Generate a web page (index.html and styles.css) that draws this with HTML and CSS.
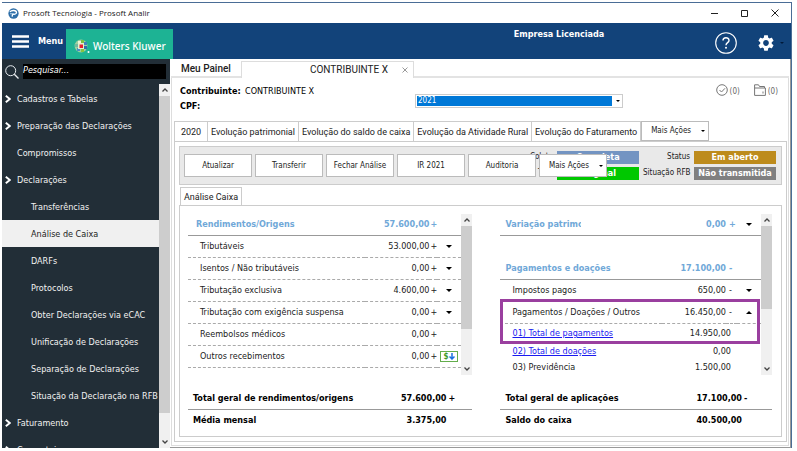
FILE: index.html
```html
<!DOCTYPE html>
<html lang="pt-BR">
<head>
<meta charset="utf-8">
<title>Prosoft Tecnologia - Prosoft Analir</title>
<link rel="stylesheet" href="styles.css">
</head>
<body>
<div class="window">
  <div class="titlebar">
    <svg class="app-icon" viewBox="0 0 12 12" aria-hidden="true"><circle cx="6" cy="6" r="5.600" fill="#2f6fa8"/><path d="M2 4.200C4 2 9 2.200 9.300 4.800C9.400 7 6 7 5 7L4.500 9.500" fill="none" stroke="#fff" stroke-width="1.500"/><path d="M2.200 6.300H6.500" stroke="#bcdcf2" stroke-width="1"/></svg>
    <span class="title">Prosoft Tecnologia - Prosoft Analir</span>
    <div class="window-buttons">
      <button type="button" aria-label="Minimizar"><svg viewBox="0 0 8 8"><path d="M0 4.500H7"/></svg></button>
      <button type="button" aria-label="Maximizar"><svg viewBox="0 0 8 8"><path d="M.5 1.500H6.500V7.500H.5Z"/></svg></button>
      <button type="button" aria-label="Fechar"><svg viewBox="0 0 8 8"><path d="M.5 .5L7.500 7.500M7.500 .5L.5 7.500"/></svg></button>
    </div>
  </div>

  <header class="header">
    <button type="button" class="menu-button">
      <svg viewBox="0 0 17 13" aria-hidden="true"><path d="M0 1.500H17M0 6.500H17M0 11.500H17" stroke="#fff" stroke-width="2.400"/></svg>
      Menu
    </button>
    <div class="brand">
      <svg viewBox="0 0 16 16" aria-hidden="true">
        <circle cx="7" cy="8" r="6.400" fill="#9ed0a0"/>
        <path d="M4 3H7V6H4Z" fill="#e9f5dc"/><path d="M7 2H10V5H7Z" fill="#7cc142"/><path d="M10 4H13V7H10Z" fill="#3f83bd"/><path d="M10 8H13V11H10Z" fill="#2e6fab"/><path d="M7 11H10V14H7Z" fill="#86c440"/><path d="M3 10H6V13H3Z" fill="#4b90c3"/><path d="M1 6H4V9H1Z" fill="#6fb9a0"/>
        <rect x="4" y="5" width="6" height="6" fill="#e3f2d0"/><rect x="5.500" y="6.500" width="3.500" height="3.500" fill="#e5202e"/><circle cx="14.500" cy="14" r="1" fill="#fff"/>
      </svg>
      Wolters Kluwer
    </div>
    <span class="company">Empresa Licenciada</span>
    <div class="header-actions">
      <button type="button" class="help" aria-label="Ajuda"><svg viewBox="0 0 22 22"><circle cx="11" cy="11" r="10.300" fill="none" stroke="#fff" stroke-width="1.100"/><path d="M8 8.600C8 4.800 14 4.800 14 8.400C14 10.700 11 10.600 11 13.200" fill="none" stroke="#fff" stroke-width="1.400"/><circle cx="11" cy="15.700" r="1" fill="#fff"/></svg></button>
      <button type="button" class="gear" aria-label="Configurações"><svg viewBox="2 2 20 20"><path fill="#fff" fill-rule="evenodd" d="M19.140 12.940c.04-.3.06-.61.06-.94 0-.32-.02-.64-.07-.94l2.030-1.580c.18-.14.23-.41.12-.61l-1.920-3.320c-.12-.22-.37-.29-.59-.22l-2.390.96c-.5-.38-1.030-.7-1.620-.94l-.36-2.540c-.04-.24-.24-.41-.48-.41h-3.840c-.24 0-.43.17-.47.41l-.36 2.540c-.59.24-1.130.57-1.620.94l-2.390-.96c-.22-.08-.47 0-.59.22L2.740 8.870c-.12.210-.08.470.12.610l2.030 1.580c-.05.3-.09.630-.09.940s.02.640.07.940l-2.030 1.580c-.18.140-.23.410-.12.610l1.920 3.320c.12.220.37.290.59.220l2.390-.96c.5.380 1.030.7 1.620.94l.36 2.540c.05.240.24.410.48.410h3.840c.24 0 .44-.17.47-.41l.36-2.540c.59-.24 1.130-.56 1.620-.94l2.390.96c.22.080.47 0 .59-.22l1.920-3.320c.12-.22.07-.47-.12-.61l-2.010-1.580zM12 15.600c-1.980 0-3.600-1.620-3.600-3.600s1.620-3.600 3.600-3.600 3.600 1.620 3.600 3.600-1.620 3.600-3.600 3.600z"/></svg><i class="caret"></i></button>
    </div>
  </header>

  <div class="body">
    <aside class="sidebar">
      <div class="search">
        <svg viewBox="0 0 14 14" aria-hidden="true"><circle cx="5.700" cy="5.700" r="5" fill="none" stroke="#e8ecef"/><path d="M9.300 9.300L13.500 13.500" stroke="#e8ecef" stroke-width="1.300"/></svg>
        <input type="text" placeholder="Pesquisar..." aria-label="Pesquisar">
      </div>
      <div class="nav-area">
        <nav class="nav">
          <a href="#"><svg class="chevron" viewBox="0 0 6 8"><path d="M.8 .8L4.800 4L.8 7.200"/></svg>Cadastros e Tabelas</a>
          <a href="#"><svg class="chevron" viewBox="0 0 6 8"><path d="M.8 .8L4.800 4L.8 7.200"/></svg>Preparação das Declarações</a>
          <a href="#">Compromissos</a>
          <a href="#"><svg class="chevron" viewBox="0 0 6 8"><path d="M.8 .8L4.800 4L.8 7.200"/></svg>Declarações</a>
          <a href="#" class="sub">Transferências</a>
          <a href="#" class="sub selected">Análise de Caixa</a>
          <a href="#" class="sub">DARFs</a>
          <a href="#" class="sub">Protocolos</a>
          <a href="#" class="sub">Obter Declarações via eCAC</a>
          <a href="#" class="sub">Unificação de Declarações</a>
          <a href="#" class="sub">Separação de Declarações</a>
          <a href="#" class="sub">Situação da Declaração na RFB</a>
          <a href="#"><svg class="chevron" viewBox="0 0 6 8"><path d="M.8 .8L4.800 4L.8 7.200"/></svg>Faturamento</a>
          <a href="#"><svg class="chevron" viewBox="0 0 6 8"><path d="M.8 .8L4.800 4L.8 7.200"/></svg>Convertoie</a>
        </nav>
        <div class="scrollbar nav-scroll"><svg viewBox="0 0 6 4"><path d="M.5 3.500L3 1L5.500 3.500"/></svg><i class="thumb"></i><svg viewBox="0 0 6 4"><path d="M.5 .5L3 3L5.500 .5"/></svg></div>
      </div>
    </aside>

    <main class="main">
      <div class="tabs">
        <button type="button" class="tab">Meu Painel</button>
        <div class="tab active"><span>CONTRIBUINTE X</span><button type="button" class="close" aria-label="Fechar aba"><svg viewBox="0 0 6 6"><path d="M.5 .5L5.500 5.500M5.500 .5L.5 5.500"/></svg></button></div>
      </div>
      <div class="page">
        <div class="taxpayer">
          <dl>
            <dt>Contribuinte:</dt><dd>CONTRIBUINTE X</dd>
            <dt>CPF:</dt><dd></dd>
          </dl>
          <div class="year">
            <select aria-label="Ano"><option>2021</option></select>
            <i class="caret"></i>
          </div>
          <div class="counters">
            <span><svg viewBox="0 0 12 12"><circle cx="6" cy="6" r="5.300"/><path d="M3.500 6L5.500 8L9 4.300"/></svg>(0)</span>
            <span><svg viewBox="0 0 12 12"><path d="M.6 11.400V.8H4.500L5.500 2.500H10.500V4M.6 4H11.400V11.400H.6M9 7.500V9.500"/></svg>(0)</span>
          </div>
        </div>

        <div class="views">
          <button type="button" class="view current">2020</button>
          <button type="button" class="view">Evolução patrimonial</button>
          <button type="button" class="view">Evolução do saldo de caixa</button>
          <button type="button" class="view">Evolução da Atividade Rural</button>
          <button type="button" class="view">Evolução do Faturamento</button>
          <button type="button" class="more">Mais Ações<i class="caret"></i></button>
        </div>

        <div class="view-body">
          <div class="toolbar">
            <div class="actions">
              <button type="button">Atualizar</button>
              <button type="button">Transferir</button>
              <button type="button">Fechar Análise</button>
              <button type="button">IR 2021</button>
              <button type="button">Auditoria</button>
              <button type="button" class="more">Mais Ações<i class="caret"></i></button>
            </div>
            <div class="status">
              <span>Coleta</span><b class="badge blue">Completa</b><span>Status</span><b class="badge gold">Em aberto</b>
              <span>Tipo</span><b class="badge green">Original</b><span>Situação RFB</span><b class="badge gray">Não transmitida</b>
            </div>
          </div>

          <button type="button" class="sheet-tab">Análise Caixa</button>
          <div class="sheet">
            <section class="column">
              <div class="pane">
                <table class="incoming">
                  <thead><tr><th>Rendimentos/Origens</th><th class="value">57.600,00</th><th class="sign">+</th><th class="toggle"></th></tr></thead>
                  <tbody>
                    <tr><td>Tributáveis</td><td class="value">53.000,00</td><td class="sign">+</td><td class="toggle"><i class="caret"></i></td></tr>
                    <tr><td>Isentos / Não tributáveis</td><td class="value">0,00</td><td class="sign">+</td><td class="toggle"><i class="caret"></i></td></tr>
                    <tr><td>Tributação exclusiva</td><td class="value">4.600,00</td><td class="sign">+</td><td class="toggle"><i class="caret"></i></td></tr>
                    <tr><td>Tributação com exigência suspensa</td><td class="value">0,00</td><td class="sign">+</td><td class="toggle"><i class="caret"></i></td></tr>
                    <tr><td>Reembolsos médicos</td><td class="value">0,00</td><td class="sign">+</td><td class="toggle"></td></tr>
                    <tr><td>Outros recebimentos</td><td class="value">0,00</td><td class="sign">+</td><td class="toggle"><button type="button" class="import" aria-label="Importar"><b>$</b><svg viewBox="0 0 6 7"><path d="M3 0V6M.5 3.500L3 6L5.500 3.500"/></svg></button></td></tr>
                  </tbody>
                </table>
                <div class="scrollbar left-scroll"><svg viewBox="0 0 6 4"><path d="M.5 3.500L3 1L5.500 3.500"/></svg><i class="thumb"></i><svg viewBox="0 0 6 4"><path d="M.5 .5L3 3L5.500 .5"/></svg></div>
              </div>
              <table class="totals">
                <tbody>
                  <tr><th>Total geral de rendimentos/origens</th><td class="value">57.600,00</td><td class="sign">+</td></tr>
                  <tr><th>Média mensal</th><td class="value">3.375,00</td><td class="sign"></td></tr>
                </tbody>
              </table>
            </section>

            <section class="column">
              <div class="pane">
                <table class="outgoing">
                  <thead><tr><th><span class="clipped">Variação patrimonial</span></th><th class="value">0,00</th><th class="sign">+</th><th class="toggle"><i class="caret"></i></th></tr></thead>
                  <tbody class="spaced"><tr><th>Pagamentos e doações</th><th class="value">17.100,00</th><th class="sign">-</th><th class="toggle"></th></tr></tbody>
                  <tbody><tr class="plain"><td>Impostos pagos</td><td class="value">650,00</td><td class="sign">-</td><td class="toggle"><i class="caret"></i></td></tr></tbody>
                  <tbody class="highlight">
                    <tr><td>Pagamentos / Doações / Outros</td><td class="value">16.450,00</td><td class="sign">-</td><td class="toggle"><i class="caret up"></i></td></tr>
                    <tr class="detail first"><td><a href="#">01) Total de pagamentos</a></td><td class="value" colspan="2">14.950,00</td><td></td></tr>
                  </tbody>
                  <tbody>
                    <tr class="detail"><td><a href="#">02) Total de doações</a></td><td class="value" colspan="2">0,00</td><td></td></tr>
                    <tr class="detail"><td>03) Previdência</td><td class="value" colspan="2">1.500,00</td><td></td></tr>
                  </tbody>
                </table>
                <div class="scrollbar right-scroll"><svg viewBox="0 0 6 4"><path d="M.5 3.500L3 1L5.500 3.500"/></svg><i class="thumb"></i><svg viewBox="0 0 6 4"><path d="M.5 .5L3 3L5.500 .5"/></svg></div>
              </div>
              <table class="totals">
                <tbody>
                  <tr><th>Total geral de aplicações</th><td class="value">17.100,00</td><td class="sign">-</td></tr>
                  <tr><th>Saldo do caixa</th><td class="value">40.500,00</td><td class="sign"></td></tr>
                </tbody>
              </table>
            </section>
          </div>
        </div>
      </div>
    </main>
  </div>
</div>
</body>
</html>
```

FILE: styles.css
```css
* { box-sizing: border-box; }

body {
  margin: 0;
  padding: 2px 5px 3px 2px;
  height: 100vh;
  background: #fff;
  color: #222;
  font: 9px/12px "DejaVu Sans Condensed", "Open Sans", sans-serif;
}

button {
  margin: 0;
  padding: 0;
  border: 0;
  background: none;
  color: inherit;
  font: inherit;
}

svg { display: block; flex: none; }

.caret {
  display: inline-block;
  flex: none;
  border: 3px solid transparent;
  border-top-color: #000;
  border-bottom-width: 0;
}
.caret.up {
  border-top-width: 0;
  border-bottom: 3px solid #000;
}

.window {
  display: flex;
  flex-direction: column;
  height: 100%;
  overflow: hidden;
  border: 1px solid #4a6d96;
  border-width: 1px 1px 0 0;
}

/* Title bar */
.titlebar {
  display: flex;
  align-items: center;
  flex: none;
  height: 20px;
  padding: 0 12px 0 6px;
  font: 8px/12px "Open Sans", sans-serif;
}
.app-icon { width: 11px; height: 11px; margin-right: 4px; }
.window-buttons { display: flex; gap: 22px; margin-left: auto; }
.window-buttons svg { width: 8px; height: 8px; fill: none; stroke: #222; }

/* Header */
.header {
  display: flex;
  flex: none;
  height: 36px;
  padding-right: 7px;
  background: #12437a;
  color: #fff;
  font-weight: bold;
}
.menu-button {
  display: flex;
  align-items: center;
  gap: 9px;
  width: 64px;
  padding-left: 10px;
}
.menu-button svg { width: 17px; height: 13px; }
.brand {
  display: flex;
  align-items: center;
  gap: 3px;
  width: 107px;
  margin-top: 6px;
  padding: 4px 0 0 8px;
  background: #1db394;
  font: 500 10px/14px "Noto Sans", sans-serif;
  white-space: nowrap;
}
.brand svg { width: 16px; height: 16px; }
.company { flex: 1; padding: 5px 0 0 230px; text-align: center; }
.header-actions { display: flex; align-items: center; gap: 21px; padding-top: 4px; }
.help svg { width: 22px; height: 22px; }
.gear { display: flex; align-items: center; gap: 6px; }
.gear svg { width: 16px; height: 16px; }
.gear .caret { border-width: 2px 2px 0; border-top-color: #001a3a; }

.body { display: flex; flex: 1; min-height: 0; }

/* Sidebar */
.sidebar {
  display: flex;
  flex-direction: column;
  flex: none;
  width: 168px;
  background: #222e37;
  color: #f2f2f2;
}
.search {
  display: flex;
  align-items: center;
  gap: 4px;
  flex: none;
  height: 25px;
  padding: 0 4px 0 3px;
}
.search svg { width: 14px; height: 14px; }
.search input {
  flex: 1;
  min-width: 0;
  height: 15px;
  padding: 0 0 4px;
  border: 0;
  background: #000;
  color: #fff;
  font: italic 9px/11px "DejaVu Sans Condensed", sans-serif;
}
.search input::placeholder { color: #fff; opacity: 1; }
.nav-area { display: flex; flex: 1; min-height: 0; }
.nav { flex: 1; overflow: hidden; padding-top: 1px; }
.nav a {
  display: flex;
  align-items: center;
  position: relative;
  height: 27px;
  padding-left: 15px;
  color: inherit;
  text-decoration: none;
  white-space: nowrap;
}
.nav .sub { padding-left: 29px; }
.nav .selected { background: #f0f0f0; color: #222; }
.chevron {
  position: absolute;
  left: 3px;
  width: 6px;
  height: 8px;
  fill: none;
  stroke: #fff;
  stroke-width: 2;
}

/* Scroll bars */
.scrollbar {
  display: flex;
  flex-direction: column;
  align-items: center;
  flex: none;
  width: 11px;
  padding: 4px 0;
  background: #f0f0f0;
}
.scrollbar svg { width: 6px; height: 4px; fill: none; stroke: #444; stroke-width: 1.300; }
.scrollbar .thumb { flex: none; width: 100%; margin: 4px 0 auto; background: #cdcdcd; }
.nav-scroll .thumb { height: 89%; }
.left-scroll .thumb { height: 103px; }
.right-scroll .thumb { height: 83px; }

/* Main area */
.main {
  display: flex;
  flex-direction: column;
  flex: 1;
  min-width: 0;
  padding: 2px 1px 1px 1px;
  border-right: 1px solid #999;
  border-bottom: 1px solid #999;
}
.tabs { display: flex; flex: none; height: 17px; border-bottom: 2px solid #e3e3e3; }
.tab {
  display: flex;
  align-items: center;
  width: 70px;
  padding-left: 10px;
  font: 500 10px/12px Roboto, sans-serif;
}
.tab.active {
  justify-content: flex-end;
  gap: 14px;
  width: 173px;
  height: 17px;
  padding: 0 5px 0 0;
  border: 1px solid #ddd;
  border-bottom: 0;
  background: #fff;
  font-weight: 400;
}
.close svg { width: 6px; height: 6px; fill: none; stroke: #999; }

.page {
  display: flex;
  flex-direction: column;
  flex: 1;
  min-height: 0;
  padding: 6px 1px 3px 2px;
  border: 1px solid #ddd;
  border-top: 0;
}
.taxpayer { display: flex; flex: none; height: 37px; padding: 0 9px 0 6px; color: #000; }
.taxpayer dl {
  display: grid;
  grid-template-columns: 65px auto;
  grid-auto-rows: 15px;
  align-content: start;
  width: 235px;
  margin: 0;
}
.taxpayer dt { font-weight: bold; line-height: 15px; }
.taxpayer dd { margin: 0; line-height: 15px; }
.year {
  display: flex;
  align-items: center;
  flex: 0 1 208px;
  height: 14px;
  margin-top: 10px;
  padding: 1px;
  gap: 4px;
  border: 1px solid #ccc;
}
.year select {
  flex: 1;
  height: 10px;
  padding: 0 0 0 1px;
  border: 0;
  border-radius: 0;
  appearance: none;
  background: #0078d7;
  color: #fff;
  font: 8px/10px "DejaVu Sans Condensed", sans-serif;
}
.year .caret { margin-right: 1px; border-width: 2px 2px 0; }
.counters { display: flex; gap: 14px; margin-left: auto; color: #666; font-size: 8px; }
.counters span { display: flex; gap: 2px; height: 14px; align-items: flex-end; }
.counters svg { width: 12px; height: 12px; margin-bottom: 2px; fill: none; stroke: #777; }

.views { display: flex; flex: none; height: 20px; }
.view {
  padding: 0 3px;
  border: 1px solid #ccc;
  border-width: 1px 1px 0 0;
  font: 9px/16px Roboto, sans-serif;
  white-space: nowrap;
}
.view.current { width: 34px; border-left-width: 1px; line-height: 18px; }
.more {
  display: flex;
  align-items: center;
  justify-content: space-between;
  width: 68px;
  padding: 0 3px 0 9px;
  border: 1px solid #bbb;
  background: #fff;
  font-size: 8px;
}
.more .caret { border-width: 2px 2px 0; }

.view-body {
  display: flex;
  flex-direction: column;
  flex: 1;
  min-height: 0;
  padding: 4px;
  border: 1px solid #ccc;
}
.toolbar {
  display: flex;
  align-items: center;
  position: relative;
  flex: none;
  height: 39px;
  padding: 0 4px;
  border: 1px solid #ccc;
  background: #e9e9e9;
  font-size: 8px;
}
.actions { display: flex; gap: 3px; position: relative; z-index: 1; }
.actions button { width: 68px; height: 23px; border: 1px solid #bbb; background: #fff; white-space: nowrap; }
.status {
  display: grid;
  position: absolute;
  right: 5px;
  grid-template-columns: 26px 82px 47px 82px;
  gap: 3px 4px;
  text-align: right;
  white-space: nowrap;
}
.badge { height: 13px; color: #fff; font-size: 9px; line-height: 13px; text-align: center; }
.blue { background: #7394c2; }
.green { background: #00c800; }
.gold { background: #bd8b1c; }
.gray { background: #808080; }

.sheet-tab {
  flex: none;
  align-self: flex-start;
  height: 18px;
  margin: 2px 0 0 1px;
  padding: 0 3px;
  border: 1px solid #ccc;
  border-bottom: 0;
  font: 9px/16px Roboto, sans-serif;
}
.sheet {
  display: flex;
  flex: 1;
  gap: 28px;
  min-height: 0;
  padding: 8px 9px 0 8px;
  border: 1px solid #ccc;
}
.column { flex: 285 1 0; min-width: 0; }
.column + .column { flex-grow: 272; }
.pane { display: flex; height: 161px; }

table { flex: 1; width: 100%; align-self: flex-start; table-layout: fixed; border-collapse: collapse; }
th, td { padding: 0; text-align: left; white-space: nowrap; }
tr { height: 22px; }
thead tr { height: 21px; }
td:first-child { padding-left: 12px; }
th:first-child { padding-left: 8px; }
.outgoing th:first-child { padding-left: 5px; }
.value { width: 64px; text-align: right; }
.sign { width: 11px; padding-left: 3px; }
.incoming .sign { width: 8px; padding-left: 1px; }
.toggle { width: 24px; text-align: center; }
.toggle .caret { vertical-align: middle; }
.pane th { color: #70a8d8; border-bottom: 1px solid #999; }
.pane td { border-bottom: 1px dashed #aaa; }
.clipped { display: block; width: 76px; overflow: hidden; }
.spaced tr { height: 44px; }
.spaced th { padding-top: 22px; }
.pane .plain td { border-bottom: 0; }
.pane .detail td { border: 0; }
.detail { height: 16px; }
.detail.first { height: 20px; }
.detail .value { padding-right: 6px; }
.detail a { color: #1a1af0; }
.highlight { position: relative; }
.highlight::after {
  content: "";
  position: absolute;
  inset: -2px 1px -1px 0;
  border: 3px solid #9a3f9f;
}

.import {
  display: inline-flex;
  align-items: center;
  gap: 1px;
  height: 11px;
  padding: 0 2px;
  border: 1px solid #63ad4c;
  color: #3d9a2b;
  font-size: 8px;
  line-height: 9px;
  vertical-align: middle;
}
.import svg { width: 6px; height: 7px; fill: none; stroke: #1b70e0; stroke-width: 1.500; }

.totals { margin-top: 12px; color: #000; font-weight: bold; }
.totals th:first-child { padding-left: 5px; }
.totals tr:first-child > * { border-bottom: 1px solid #999; }
.totals .value { width: 68px; }
.totals .sign { width: 26px; padding-left: 2px; }
.column + .column .totals .sign { width: 30px; }
```
